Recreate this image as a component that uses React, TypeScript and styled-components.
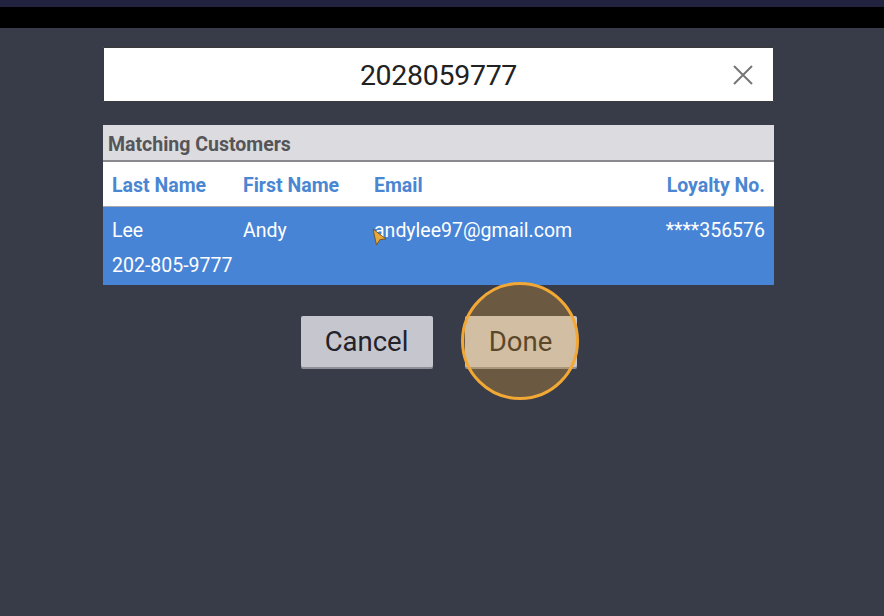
import React from 'react';
import styled, { createGlobalStyle } from 'styled-components';

const GlobalStyle = createGlobalStyle`
  html, body {
    margin: 0;
    padding: 0;
    background: #383b48;
    font-family: Roboto, 'Liberation Sans', sans-serif;
  }
`;

const Screen = styled.div`
  width: 884px;
  height: 616px;
  background: #383b48;
  overflow: hidden;
  display: flex;
  flex-direction: column;
`;

const StatusStrip = styled.div`
  height: 7px;
  background: #22233f;
`;

const BlackBar = styled.div`
  height: 21px;
  background: #000;
`;

const Dialog = styled.div`
  width: 671px;
  margin: 19px 0 0 103px;
  display: flex;
  flex-direction: column;
`;

const SearchBox = styled.div`
  height: 55px;
  box-sizing: border-box;
  background: #fff;
  border: 1px solid #3a3a3a;
  border-radius: 1px;
  display: grid;
  grid-template-columns: 60px 1fr 60px;
  align-items: center;
`;

const SearchText = styled.div`
  grid-column: 2;
  text-align: center;
  font-size: 28.5px;
  letter-spacing: -0.3px;
  color: #222;
  padding-top: 2px;
`;

const ClearButton = styled.div`
  grid-column: 3;
  justify-self: end;
  margin-right: 20px;
  width: 20px;
  height: 20px;
  display: flex;
  margin-top: 1px;
`;

const Table = styled.div`
  margin-top: 23px;
  position: relative;
`;

const TableTitle = styled.div`
  height: 37px;
  background: #dcdbe0;
  border-bottom: 2px solid #8a8a8e;
  box-sizing: border-box;
  padding: 3px 5px 0;
  display: flex;
  align-items: center;
  font-size: 19.5px;
  font-weight: 700;
  color: #555558;
`;

const Grid = styled.div<{ $selected?: boolean }>`
  display: grid;
  grid-template-columns: 131px 131px 1fr auto;
  padding: 0 9px;
  font-size: 19.5px;
  background: ${({ $selected }) => ($selected ? '#4884d6' : '#fff')};
  color: ${({ $selected }) => ($selected ? '#fff' : '#4a86d1')};
  font-weight: ${({ $selected }) => ($selected ? 400 : 700)};
`;

const HeaderRow = styled(Grid)`
  height: 45px;
  align-items: center;
  border-bottom: 1px solid #a8a8ac;
  box-sizing: border-box;
  padding-top: 2px;
`;

const DataRow = styled(Grid)`
  height: 78px;
  box-sizing: border-box;
  padding-top: 6px;
  padding-bottom: 2px;
  line-height: 35px;
  position: relative;
`;

const Cell = styled.div<{ $right?: boolean; $full?: boolean }>`
  text-align: ${({ $right }) => ($right ? 'right' : 'left')};
  grid-column: ${({ $full }) => ($full ? '1 / -1' : 'auto')};
  white-space: nowrap;
`;

const Cursor = styled.svg`
  position: absolute;
  left: 269px;
  top: 21px;
  width: 15px;
  height: 18px;
`;

const Buttons = styled.div`
  margin-top: 31px;
  display: flex;
  justify-content: center;
  gap: 32px;
`;

const Button = styled.div<{ $width: number }>`
  position: relative;
  width: ${({ $width }) => $width}px;
  height: 51px;
  box-sizing: border-box;
  background: #c6c6cf;
  border-radius: 2px;
  box-shadow: 0 2px 0 #8e8e98;
  display: flex;
  align-items: center;
  justify-content: center;
  font-size: 27.5px;
  color: #222228;
`;

const TapRing = styled.div`
  position: absolute;
  left: 50%;
  top: 50%;
  width: 118px;
  height: 118px;
  margin-left: -60px;
  margin-top: -60px;
  border-radius: 50%;
  border: 3px solid #f2a835;
  background: rgba(240, 168, 48, 0.28);
  box-sizing: border-box;
  pointer-events: none;
`;

export default function App() {
  return (
    <>
      <GlobalStyle />
      <Screen>
        <StatusStrip />
        <BlackBar />
        <Dialog>
          <SearchBox>
            <SearchText>2028059777</SearchText>
            <ClearButton>
              <svg width="20" height="20" viewBox="0 0 20 20">
                <path d="M1 1 L19 19 M19 1 L1 19" stroke="#767676" strokeWidth="2" fill="none" />
              </svg>
            </ClearButton>
          </SearchBox>

          <Table>
            <TableTitle>Matching Customers</TableTitle>
            <HeaderRow>
              <Cell>Last Name</Cell>
              <Cell>First Name</Cell>
              <Cell>Email</Cell>
              <Cell $right>Loyalty No.</Cell>
            </HeaderRow>
            <DataRow $selected>
              <Cell>Lee</Cell>
              <Cell>Andy</Cell>
              <Cell>andylee97@gmail.com</Cell>
              <Cell $right>****356576</Cell>
              <Cell $full>202-805-9777</Cell>
              <Cursor viewBox="0 0 15 18">
                <path d="M1 1 L14 11 L8 11.5 L4.5 17 Z" fill="#eaa83a" stroke="#6a4a10" strokeWidth="0.8" />
              </Cursor>
            </DataRow>
          </Table>

          <Buttons>
            <Button $width={132}>Cancel</Button>
            <Button $width={112}>
              Done
              <TapRing />
            </Button>
          </Buttons>
        </Dialog>
      </Screen>
    </>
  );
}
